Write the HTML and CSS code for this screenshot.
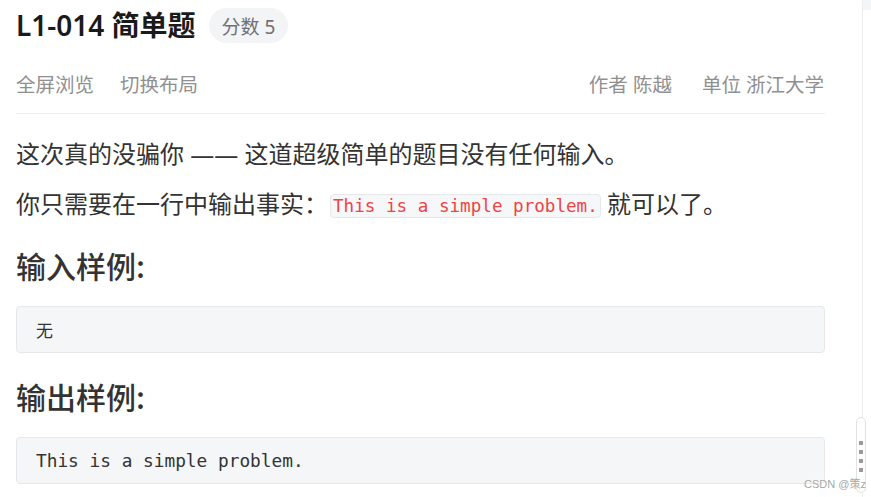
FILE: index.html
```html
<!DOCTYPE html>
<html lang="zh-CN">
<head>
<meta charset="utf-8">
<title>L1-014 简单题</title>
<link rel="stylesheet" href="styles.css">
</head>
<body>
<div class="page">
  <main class="main">
    <div class="title-row">
      <h1 class="title">L1-014 简单题</h1>
      <span class="badge">分数 5</span>
    </div>
    <div class="meta-row">
      <div class="meta-left">
        <span class="meta-link">全屏浏览</span>
        <span class="meta-link">切换布局</span>
      </div>
      <div class="meta-right">
        <span class="meta-item">作者 陈越</span>
        <span class="meta-item">单位 浙江大学</span>
      </div>
    </div>
    <div class="content">
      <p class="para">这次真的没骗你 —— 这道超级简单的题目没有任何输入。</p>
      <p class="para">你只需要在一行中输出事实：<code class="inline-code">This is a simple problem.</code> 就可以了。</p>
      <h2 class="sec-title">输入样例:</h2>
      <pre class="sample">无</pre>
      <h2 class="sec-title">输出样例:</h2>
      <pre class="sample mono">This is a simple problem.</pre>
    </div>
  </main>
  <aside class="side">
    <div class="side-top"></div>
  </aside>
</div>
<div class="handle">
  <span class="dot"></span><span class="dot"></span><span class="dot"></span><span class="dot"></span>
</div>
<div class="watermark">CSDN @策z</div>
</body>
</html>
```
FILE: styles.css
```css
html, body {
  margin: 0;
  padding: 0;
  background: #fff;
  font-family: "Noto Sans", "Noto Sans CJK SC", sans-serif;
}
.page {
  display: flex;
  height: 497px;
  overflow: hidden;
}
.main {
  width: 809px;
  padding: 0 37px 0 16px;
  flex: none;
}
.side {
  flex: 1;
  border-left: 1px solid #eeeeef;
}
.side-top {
  height: 10px;
  background: #f4f5f6;
}
.title-row {
  display: flex;
  align-items: center;
  height: 35px;
  padding-top: 8px;
}
.title {
  margin: 0 13px 0 0;
  font-size: 28px;
  font-weight: 600;
  line-height: 35px;
  color: #1a1a1a;
  font-family: "Noto Sans", "Noto Sans CJK SC", sans-serif;
}
.badge {
  display: inline-flex;
  align-items: center;
  height: 35px;
  padding: 0 13px;
  border-radius: 18px;
  background: #f3f4f6;
  color: #707075;
  font-size: 19px;
  font-family: "Noto Sans", "Noto Sans CJK SC", sans-serif;
}
.meta-row {
  display: flex;
  justify-content: space-between;
  align-items: center;
  height: 28px;
  margin-top: 26px;
  padding-bottom: 16px;
  border-bottom: 1px solid #eceef0;
  font-family: "Noto Sans", "Noto Sans CJK SC", sans-serif;
  font-size: 19.5px;
  color: #909090;
}
.meta-left, .meta-right {
  display: flex;
  gap: 26px;
}
.meta-right {
  gap: 30px;
  padding-right: 1px;
}
.content {
  color: #333;
  font-family: "Noto Sans", "Noto Sans CJK SC", sans-serif;
}
.para {
  margin: 23px 0 0;
  font-size: 24px;
  line-height: 34px;
}
.para + .para {
  margin-top: 16px;
}
.inline-code {
  display: inline-block;
  font-family: "DejaVu Sans Mono", monospace;
  font-size: 17.6px;
  line-height: 22px;
  color: #ef4444;
  background: #f6f7f8;
  border: 1px solid #e6e8eb;
  border-radius: 4px;
  padding: 0 2px;
  margin-left: 2px;
  vertical-align: 1px;
}
.sec-title {
  margin: 24px 0 0;
  font-size: 30px;
  font-weight: 500;
  line-height: 40px;
  color: #333;
  font-family: "Noto Sans CJK SC", sans-serif;
}
.sample {
  margin: 21px 0 0;
  height: 45px;
  display: flex;
  align-items: center;
  padding: 0 19px;
  background: #f5f6f7;
  border: 1px solid #e6e8eb;
  border-radius: 4px;
  font-family: "Noto Sans CJK SC", sans-serif;
  font-size: 17px;
  color: #333;
}
.sample.mono {
  font-family: "DejaVu Sans Mono", monospace;
  font-size: 17.8px;
}
.sec-title + .sample + .sec-title {
  margin-top: 23px;
}
.handle {
  position: absolute;
  left: 856px;
  top: 417px;
  width: 10px;
  height: 76px;
  border: 1px solid #e2e2e2;
  border-radius: 6px;
  background: #fff;
  display: flex;
  flex-direction: column;
  align-items: center;
  padding-top: 23px;
  box-sizing: border-box;
  gap: 5px;
}
.dot {
  width: 4px;
  height: 4px;
  background: #9a9a9a;
}
.watermark {
  position: absolute;
  left: 804px;
  top: 475px;
  font-family: "Liberation Sans", "Noto Sans CJK SC", sans-serif;
  font-size: 11px;
  color: #a8a8a8;
  text-shadow: 0 0 2px #fff;
}
```
